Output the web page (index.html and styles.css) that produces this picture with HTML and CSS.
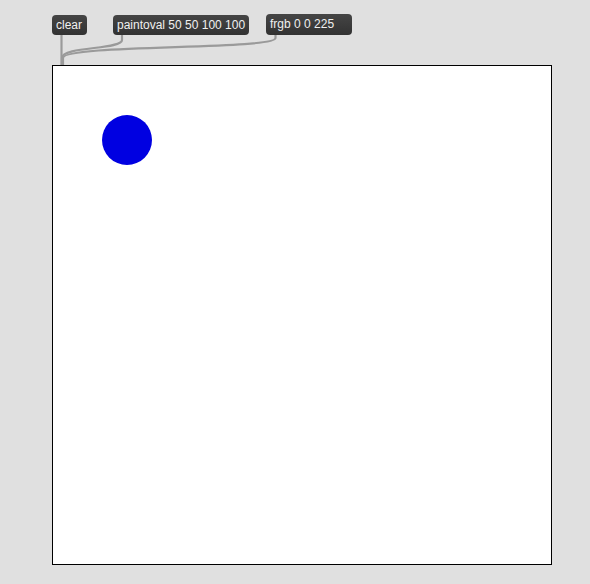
FILE: index.html
```html
<!DOCTYPE html>
<html>
<head>
<meta charset="utf-8">
<link rel="stylesheet" href="styles.css">
</head>
<body>
<div class="patcher">
  <svg class="cables" width="590" height="584" viewBox="0 0 590 584">
    <path d="M61.5 34 L61.5 66" />
    <path d="M122 34 L122 40 C122 50 62 46 62 58 L62 66" />
    <path d="M275.5 34 L275.5 38 C275.5 50 63 44 63 58 L63 66" />
  </svg>
  <div class="msg msg-clear">clear</div>
  <div class="msg msg-oval">paintoval 50 50 100 100</div>
  <div class="msg msg-frgb">frgb 0 0 225</div>
  <div class="lcd">
    <div class="oval"></div>
  </div>
</div>
</body>
</html>
```
FILE: styles.css
```css
html, body {
  margin: 0;
  padding: 0;
  background: #e0e0e0;
}
.patcher {
  position: relative;
  width: 590px;
  height: 584px;
  overflow: hidden;
  font-family: "Liberation Sans", Arial, sans-serif;
}
.cables {
  position: absolute;
  left: 0;
  top: 0;
}
.cables path {
  fill: none;
  stroke: #9a9a9a;
  stroke-width: 2.2;
}
.msg {
  position: absolute;
  top: 15px;
  height: 20px;
  box-sizing: border-box;
  padding: 0 0 0 4px;
  border-radius: 4px;
  background: linear-gradient(#454545, #323232);
  color: #f0f0f0;
  font-size: 12px;
  line-height: 20px;
  white-space: nowrap;
}
.msg-clear { left: 52px; width: 35px; }
.msg-oval { left: 113px; width: 136px; }
.msg-frgb { left: 266px; width: 86px; top: 14px; height: 21px; line-height: 21px; }
.lcd {
  position: absolute;
  left: 52px;
  top: 65px;
  width: 500px;
  height: 500px;
  box-sizing: border-box;
  border: 1px solid #000;
  background: #fff;
}
.oval {
  position: absolute;
  left: 49px;
  top: 49px;
  width: 50px;
  height: 50px;
  border-radius: 50%;
  background: #0000e1;
}
```
